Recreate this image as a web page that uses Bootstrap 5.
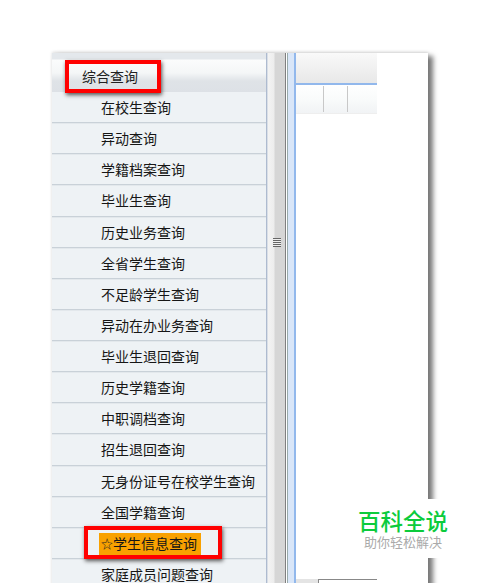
<!DOCTYPE html>
<html lang="zh"><head><meta charset="utf-8">
<link href="https://cdn.jsdelivr.net/npm/bootstrap@5.3.0/dist/css/bootstrap.min.css" rel="stylesheet">
<style>
html,body{height:583px;overflow:hidden;background:#fff}
body{font-family:"Liberation Sans","Noto Sans CJK SC",sans-serif;font-size:14px;color:#161616}
.shell{margin:53px 0 0 52px;width:376px;height:540px;box-shadow:5px 3px 5px #777,0 -1px 3px #ddd;background:#fff;position:relative}
.side{width:214px;background:#eef2f5;flex:none}
.sidehead{height:39px;padding:0 0 0 30px;line-height:48px;background:linear-gradient(#e4e8ec 0,#e4e8ec 6px,#fbfcfc 7px,#f4f6f7 20px,#dfe3e7 28px,#dde1e6 39px);color:#222}
.sideitem{height:31.13px;padding-left:49px;line-height:32px;border-bottom:1px solid #c9d1d8;box-shadow:0 1px 0 #e3e8ec;white-space:nowrap}
.fav{display:inline-block;background:#f9a100;line-height:22px;height:22px;padding:0 4px 0 2px;margin-left:-2px}
.favstar{display:inline-block;width:12px;font-size:12px;color:#222}
.divline{width:2px;flex:none;background:linear-gradient(90deg,#98a9c4,#eef0f2)}
.split{width:20px;flex:none;background:linear-gradient(90deg,#f3f3f3 0,#ededed 30%,#d6d6d6 35%,#d6d6d6 85%,#808080 85%,#808080 90%,#fff 90%,#fff 95%,#9aa 95%)}
.grip{width:8px;height:9px;margin-left:5px;margin-top:185px;background:repeating-linear-gradient(#666 0,#666 1px,#eee 1px,#eee 2px)}
.strip{width:6px;flex:none;background:#d9e6f8}
.main{flex:1;border-left:2px solid #92b8ec;min-width:0}
.mainhead{width:81px;height:32px;background:linear-gradient(#f9f9f9,#e8e8e8);border-bottom:2px solid #92b8ec}
.tools{width:81px;height:29px;padding:1px 0 0 4px;background:linear-gradient(#fff,#f9fbfb 50%,#f1f3f5);border-bottom:1px solid #eee}
.toolcell{width:24px;height:26px;border-right:1px solid #c8c8c8}
.boxmark{position:absolute;border:4px solid #f00;box-shadow:1px 2px 4px #555}
.bm1{left:13px;top:7px;width:96px;height:33px}
.bm2{left:32px;top:473px;width:138px;height:33px}
.wm{position:absolute;left:340px;top:499px;width:151px;height:59px;background:#fff}
.wm1{color:#0ccb3c;font-size:22.5px;line-height:24px;margin-top:12px;font-weight:500;text-align:right;padding-right:43px}
.wm2{color:#aaa;font-size:13px;line-height:15px;text-align:right;padding-right:49px}
.tabbar{position:absolute;left:296px;top:579px;width:81px;height:8px;background:#e4e4e4}
.tabon{position:absolute;left:318px;top:579px;width:59px;height:8px;background:#fff;border-top:1px solid #888;border-left:1px solid #888}
</style></head><body>
<div class="shell d-flex">
 <div class="side">
  <div class="sidehead">综合查询</div>
  <div class="sideitem">在校生查询</div>
  <div class="sideitem">异动查询</div>
  <div class="sideitem">学籍档案查询</div>
  <div class="sideitem">毕业生查询</div>
  <div class="sideitem">历史业务查询</div>
  <div class="sideitem">全省学生查询</div>
  <div class="sideitem">不足龄学生查询</div>
  <div class="sideitem">异动在办业务查询</div>
  <div class="sideitem">毕业生退回查询</div>
  <div class="sideitem">历史学籍查询</div>
  <div class="sideitem">中职调档查询</div>
  <div class="sideitem">招生退回查询</div>
  <div class="sideitem">无身份证号在校学生查询</div>
  <div class="sideitem">全国学籍查询</div>
  <div class="sideitem"><span class="fav"><span class="favstar">☆</span>学生信息查询</span></div>
  <div class="sideitem">家庭成员问题查询</div>
 </div>
 <div class="divline"></div>
 <div class="split"><div class="grip"></div></div>
 <div class="strip"></div>
 <div class="main">
  <div class="mainhead"></div>
  <div class="tools d-flex"><div class="toolcell"></div><div class="toolcell"></div></div>
 </div>
 <div class="boxmark bm1"></div>
 <div class="boxmark bm2"></div>
</div>
<div class="tabbar"></div><div class="tabon"></div>
<div class="wm"><div class="wm1">百科全说</div><div class="wm2">助你轻松解决</div></div>
</body></html>
